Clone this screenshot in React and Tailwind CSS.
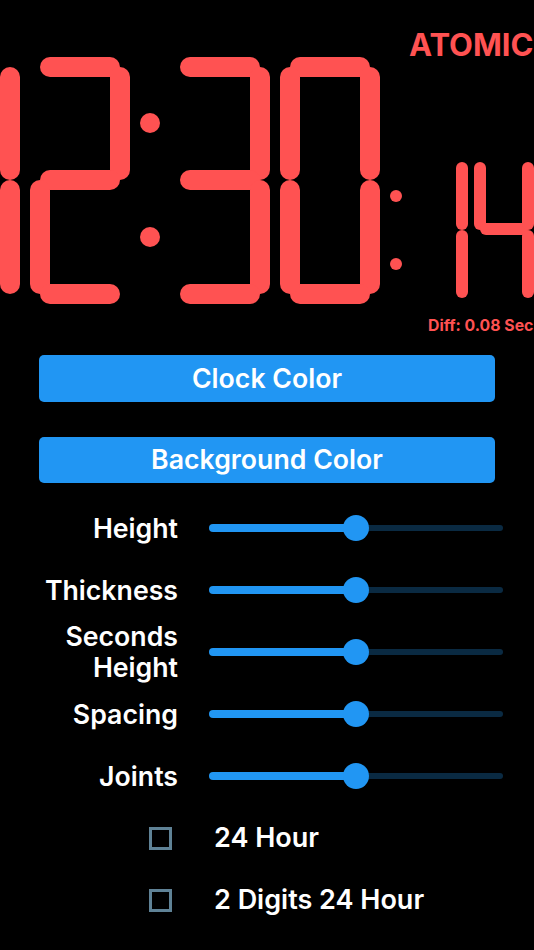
import React from 'react';

const font = { fontFamily: 'Inter, sans-serif' };

// [x, y, width, height] of every lit segment, measured in svg space (clock starts at y 57)
const bigSegments = [
  // 1
  [0, 10, 20, 113], [0, 123, 20, 114],
  // 2
  [40, 0, 80, 20], [110, 10, 20, 113], [40, 113, 80, 20], [30, 123, 20, 114], [40, 227, 80, 20],
  // 3
  [180, 0, 80, 20], [250, 10, 20, 113], [180, 113, 80, 20], [250, 123, 20, 114], [180, 227, 80, 20],
  // 0
  [290, 0, 80, 20], [360, 10, 20, 113], [360, 123, 20, 114], [290, 227, 80, 20], [280, 10, 20, 113], [280, 123, 20, 114],
];

const smallSegments = [
  // 1
  [456, 105, 12, 68], [456, 173, 12, 68],
  // 4
  [474, 105, 12, 68], [480, 166, 48, 12], [522, 105, 12, 68], [522, 173, 12, 68],
];

function ClockFace() {
  return (
    <svg width="534" height="247" viewBox="0 0 534 247" className="block" fill="#ff5252">
      {bigSegments.map(([x, y, w, h], i) => (
        <rect key={i} x={x} y={y} width={w} height={h} rx="10" />
      ))}
      {smallSegments.map(([x, y, w, h], i) => (
        <rect key={i} x={x} y={y} width={w} height={h} rx="6" />
      ))}
      <circle cx="150" cy="66" r="10" />
      <circle cx="150" cy="180" r="10" />
      <circle cx="396" cy="139" r="6" />
      <circle cx="396" cy="207" r="6" />
    </svg>
  );
}

function ColorButton({ label, className }) {
  return (
    <button className={`mx-[39px] w-[456px] rounded-[5px] bg-[#2196f3] pb-[1px] text-[26.7px] font-semibold text-white ${className}`}>
      {label}
    </button>
  );
}

function SliderRow({ label }) {
  return (
    <div className="flex h-[62px] items-center">
      <div className="w-[178px] text-right text-[26.7px] leading-[31px] font-semibold text-white">{label}</div>
      <div className="ml-[31px] flex w-[294px] items-center">
        <div className="h-2 w-[147px] rounded-l-full bg-[#2196f3]" />
        <div className="h-[26px] w-[26px] shrink-0 -translate-x-[13px] rounded-full bg-[#2196f3]" />
        <div className="-ml-[26px] h-[6px] w-[147px] rounded-r-full bg-[#0a2a42]" />
      </div>
    </div>
  );
}

function CheckRow({ label }) {
  return (
    <div className="flex h-[62px] items-center">
      <div className="ml-[149px] h-[23px] w-[23px] border-[3px] border-[#5f8296]" />
      <div className="ml-[42px] pt-[1px] text-[27px] font-semibold text-white">{label}</div>
    </div>
  );
}

export default function App() {
  return (
    <div className="h-[950px] w-[534px] overflow-hidden bg-black" style={font}>
      <div className="h-[57px] pt-[25px] pl-[409px] text-[31px] leading-[40px] font-bold whitespace-nowrap text-[#ff5252]">
        ATOMIC
      </div>
      <ClockFace />
      <div className="h-[51px] pt-[13px] pl-[428px] text-[15.8px] leading-[18px] font-bold whitespace-nowrap text-[#ff5252]">
        Diff: 0.08 Sec
      </div>
      <div className="flex flex-col items-start">
        <ColorButton label="Clock Color" className="h-[47px]" />
        <ColorButton label="Background Color" className="mt-[35px] h-[46px]" />
      </div>
      <div className="mt-[14px]">
        <SliderRow label="Height" />
        <SliderRow label="Thickness" />
        <SliderRow label={<>Seconds<br />Height</>} />
        <SliderRow label="Spacing" />
        <SliderRow label="Joints" />
      </div>
      <div>
        <CheckRow label="24 Hour" />
        <CheckRow label="2 Digits 24 Hour" />
      </div>
    </div>
  );
}
